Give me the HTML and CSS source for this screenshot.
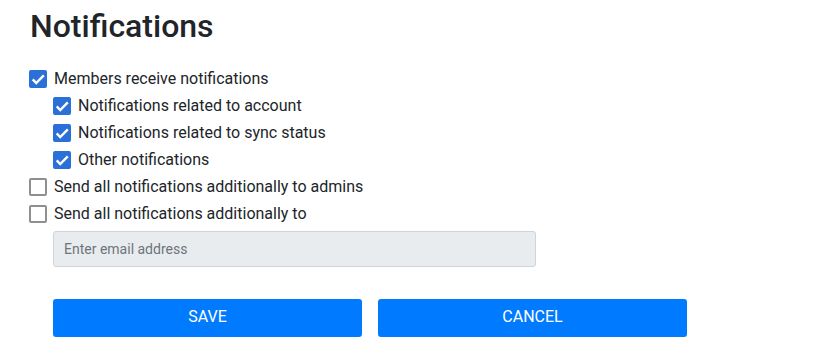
FILE: index.html
```html
<!DOCTYPE html>
<html lang="en">
<head>
  <meta charset="UTF-8" />
  <title>Notifications</title>
  <link rel="stylesheet" href="styles.css">
</head>
<body>

<div class="page">
  <h1>Notifications</h1>

  <div class="options">
    <label class="opt"><input type="checkbox" checked> Members receive notifications</label>
    <div class="sub">
      <label class="opt"><input type="checkbox" checked> Notifications related to account</label>
      <label class="opt"><input type="checkbox" checked> Notifications related to sync status</label>
      <label class="opt"><input type="checkbox" checked> Other notifications</label>
    </div>
    <label class="opt"><input type="checkbox"> Send all notifications additionally to admins</label>
    <label class="opt"><input type="checkbox"> Send all notifications additionally to</label>
  </div>

  <input type="text" class="email" placeholder="Enter email address" disabled>

  <div class="actions">
    <button class="btn">Save</button>
    <button class="btn">Cancel</button>
  </div>
</div>

</body>
</html>
```

FILE: styles.css
```css
* {
  box-sizing: border-box;
}

body {
  margin: 0;
  font-family: Roboto, 'Liberation Sans', sans-serif;
  color: #212529;
  background: #fff;
}

.page {
  padding: 6px 0 0 29px;
}

h1 {
  margin: 0 0 19px 1px;
  font-size: 32px;
  font-weight: 500;
  line-height: 40px;
  color: #212529;
}

.options {
  display: flex;
  flex-direction: column;
}

.sub {
  display: flex;
  flex-direction: column;
  padding-left: 24px;
}

.opt {
  display: flex;
  align-items: center;
  gap: 7px;
  height: 27px;
  font-size: 16px;
}

.opt input {
  appearance: none;
  margin: 0;
  width: 18px;
  height: 18px;
  border: 2px solid #8f8f8f;
  border-radius: 2px;
  background: #fff;
}

.opt input:checked {
  border-color: #2b6fd8;
  background: #2b6fd8 url("data:image/svg+xml,%3Csvg xmlns='http://www.w3.org/2000/svg' viewBox='0 0 14 14'%3E%3Cpath d='M2 7.2l3.2 3.2L12 3.6' fill='none' stroke='%23fff' stroke-width='2.2'/%3E%3C/svg%3E") center/15px no-repeat;
}

.email {
  display: block;
  margin: 4px 0 0 24px;
  width: 483px;
  height: 36px;
  padding: 0 10px;
  border: 1px solid #ced4da;
  border-radius: 3px;
  background: #e9ecef;
  font-family: inherit;
  font-size: 14px;
}

.email::placeholder {
  color: #6c757d;
}

.actions {
  display: flex;
  gap: 16px;
  margin: 32px 0 0 24px;
}

.btn {
  width: 309px;
  height: 38px;
  padding: 0 0 3px;
  border: none;
  border-radius: 3px;
  background: #007bff;
  color: #fff;
  font-family: inherit;
  font-size: 16px;
  text-transform: uppercase;
}
```
